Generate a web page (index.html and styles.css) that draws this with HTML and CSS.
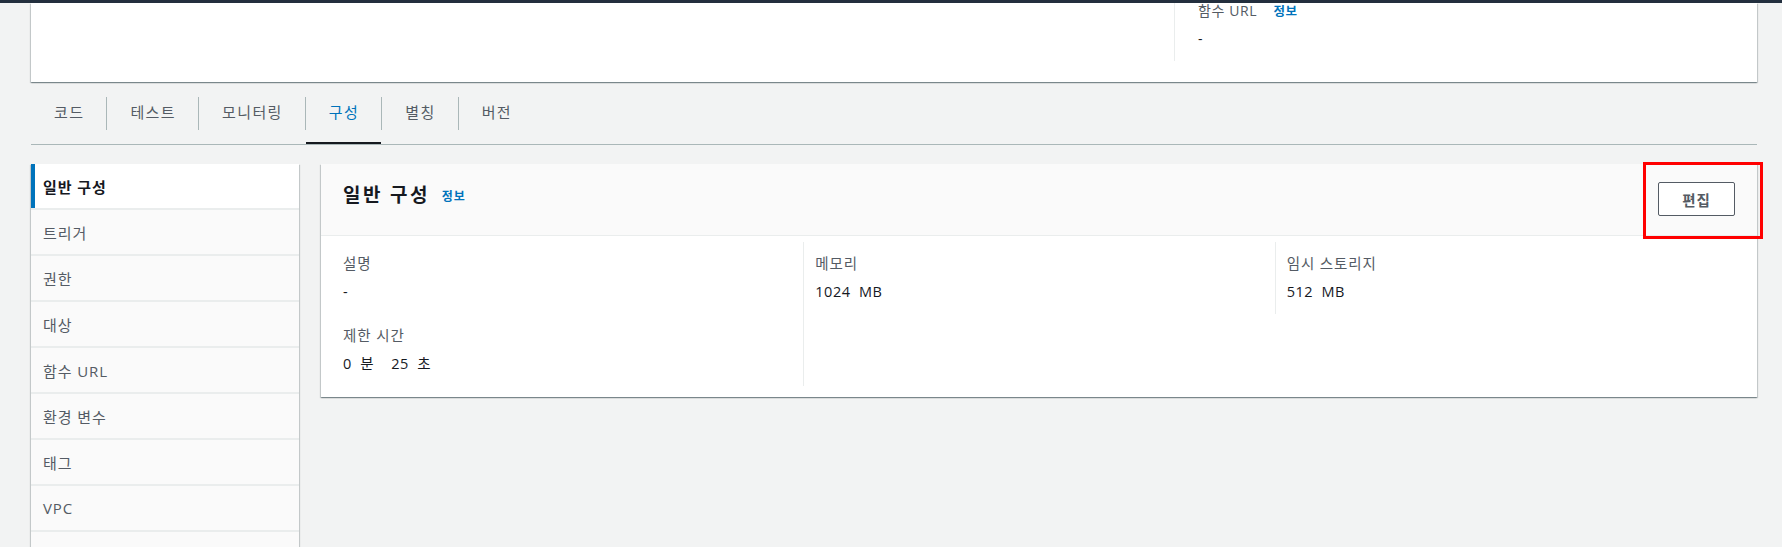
FILE: index.html
```html
<!DOCTYPE html>
<html lang="ko">
<head>
<meta charset="utf-8">
<title>구성</title>
<link rel="stylesheet" href="styles.css">
</head>
<body>
<div class="topbar"></div>
<div class="page">
  <section class="fn-card">
    <div class="fn-spacer"></div>
    <div class="fn-col">
      <div class="fn-label">함수 URL <a class="info">정보</a></div>
      <div class="fn-value">-</div>
    </div>
  </section>

  <nav class="tabs">
    <div class="tab">코드</div>
    <span class="tab-sep"></span>
    <div class="tab">테스트</div>
    <span class="tab-sep"></span>
    <div class="tab">모니터링</div>
    <span class="tab-sep"></span>
    <div class="tab active">구성</div>
    <span class="tab-sep"></span>
    <div class="tab">별칭</div>
    <span class="tab-sep"></span>
    <div class="tab">버전</div>
  </nav>

  <div class="layout">
    <aside class="side">
      <div class="side-item active">일반 구성</div>
      <div class="side-item">트리거</div>
      <div class="side-item">권한</div>
      <div class="side-item">대상</div>
      <div class="side-item">함수 URL</div>
      <div class="side-item">환경 변수</div>
      <div class="side-item">태그</div>
      <div class="side-item">VPC</div>
      <div class="side-item"></div>
    </aside>

    <section class="card">
      <header class="card-head">
        <h2 class="card-title">일반 구성<a class="info title-info">정보</a></h2>
        <button class="btn">편집</button>
        <div class="highlight"></div>
      </header>
      <div class="card-body">
        <div class="kv-grid">
          <div class="cell">
            <div class="kv-label">설명</div>
            <div class="kv-value">-</div>
          </div>
          <div class="cell divided">
            <div class="kv-label">메모리</div>
            <div class="kv-value">1024&nbsp; MB</div>
          </div>
          <div class="cell divided">
            <div class="kv-label">임시 스토리지</div>
            <div class="kv-value">512&nbsp; MB</div>
          </div>
          <div class="cell">
            <div class="kv-label">제한 시간</div>
            <div class="kv-value">0&nbsp; 분&nbsp;&nbsp;&nbsp; 25&nbsp; 초</div>
          </div>
          <div class="cell divided"></div>
        </div>
      </div>
    </section>
  </div>
</div>
</body>
</html>
```

FILE: styles.css
```css
html, body {
  margin: 0;
  padding: 0;
}

body {
  background: #f2f3f3;
  font-family: "Open Sans", "Noto Sans CJK KR", sans-serif;
  color: #16191f;
  overflow: hidden;
}

.topbar {
  height: 3px;
  background: #232f3e;
}

.page {
  padding: 0 25px 0 31px;
}

/* top function card (scrolled) */
.fn-card {
  background: #fff;
  display: grid;
  grid-template-columns: 1143px 1fr;
  padding-bottom: 21px;
  box-shadow: 0 1px 1px 0 rgba(0, 28, 36, 0.3), 1px 1px 1px 0 rgba(0, 28, 36, 0.15), -1px 1px 1px 0 rgba(0, 28, 36, 0.15);
}

.fn-col {
  height: 58px;
  border-left: 1px solid #eaeded;
  padding-left: 23px;
}

.fn-label {
  font-size: 14px;
  line-height: 16px;
  color: #545b64;
  letter-spacing: 0.6px;
}

.fn-label .info {
  margin-left: 12px;
  font-size: 12.5px;
}

.fn-value {
  margin-top: 8px;
  font-size: 14px;
  line-height: 22px;
  color: #16191f;
}

.info {
  color: #0073bb;
  font-weight: 700;
  text-decoration: none;
}

/* tabs */
.tabs {
  display: flex;
  height: 62px;
  border-bottom: 1px solid #aab7b8;
}

.tab {
  display: flex;
  align-items: center;
  padding: 0 22px 3px 23px;
  font-size: 15px;
  letter-spacing: 1.4px;
  color: #545b64;
}

.tab.active {
  color: #0073bb;
  box-shadow: inset 0 -2px 0 #16191f;
}

.tab-sep {
  width: 1px;
  height: 33px;
  background: #aab7b8;
  align-self: center;
}

/* main layout */
.layout {
  display: grid;
  grid-template-columns: 268px 1fr;
  gap: 22px;
  margin-top: 19px;
  align-items: start;
}

.side {
  background: #eaeded;
  display: flex;
  flex-direction: column;
  gap: 2px;
  box-shadow: 0 1px 1px 0 rgba(0, 28, 36, 0.3), 1px 1px 1px 0 rgba(0, 28, 36, 0.15), -1px 1px 1px 0 rgba(0, 28, 36, 0.15);
}

.side-item {
  height: 44px;
  display: flex;
  align-items: center;
  padding-left: 12px;
  background: #fafafa;
  font-size: 15px;
  letter-spacing: 0.9px;
  color: #545b64;
}

.side-item.active {
  background: #fff;
  border-left: 4px solid #0073bb;
  padding-left: 8px;
  font-weight: 700;
  color: #16191f;
}

/* config card */
.card {
  background: #fff;
  box-shadow: 0 1px 1px 0 rgba(0, 28, 36, 0.3), 1px 1px 1px 0 rgba(0, 28, 36, 0.15), -1px 1px 1px 0 rgba(0, 28, 36, 0.15);
}

.card-head {
  position: relative;
  display: flex;
  justify-content: space-between;
  align-items: flex-start;
  padding: 18px 22px 19px;
  background: #fafafa;
  border-bottom: 1px solid #eaeded;
}

.card-title {
  margin: 0;
  font-size: 19px;
  line-height: 26px;
  font-weight: 700;
  letter-spacing: 2.4px;
  color: #16191f;
}

.title-info {
  margin-left: 12px;
  font-size: 12px;
  letter-spacing: 0.8px;
  vertical-align: 1px;
}

.btn {
  width: 77px;
  height: 34px;
  background: #fff;
  border: 1px solid #545b64;
  border-radius: 2px;
  font-family: inherit;
  font-size: 14.5px;
  font-weight: 700;
  letter-spacing: 1px;
  color: #545b64;
  padding: 0;
}

.highlight {
  position: absolute;
  top: -2px;
  right: -6px;
  width: 120px;
  height: 77px;
  box-sizing: border-box;
  border: 3px solid #ff0000;
}

.card-body {
  padding: 6px 11px 11px;
}

.kv-grid {
  display: grid;
  grid-template-columns: 1fr 1fr 1fr;
}

.cell {
  padding: 11px 11px;
}

.cell.divided {
  border-left: 1px solid #eaeded;
}

.kv-label {
  font-size: 14.5px;
  line-height: 22px;
  letter-spacing: 0.9px;
  color: #545b64;
}

.kv-value {
  margin-top: 6px;
  font-size: 14.5px;
  line-height: 22px;
  letter-spacing: 0.5px;
  color: #16191f;
}
```
